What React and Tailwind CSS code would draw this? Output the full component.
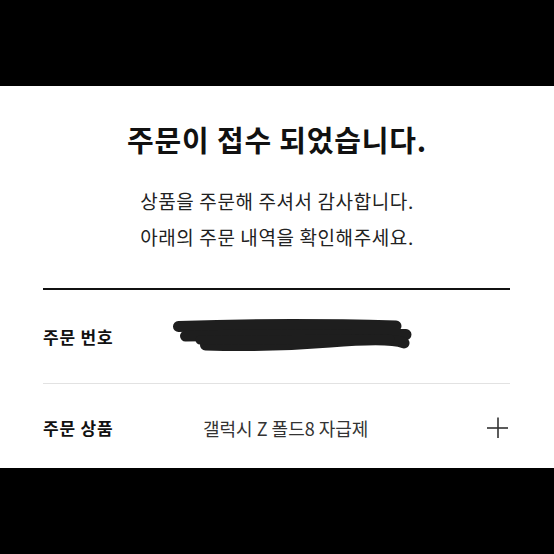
import React from "react";

// marker strokes that black out the order number
const Redaction = () => (
  <svg
    width="245"
    height="36"
    viewBox="0 0 245 36"
    className="absolute left-[127px] top-[29px]"
    fill="none"
    stroke="#1e1e1e"
    strokeWidth="11"
    strokeLinecap="round"
    strokeLinejoin="round"
  >
    <path d="M8.5 7.5 Q 110 4 226 7" />
    <path d="M15.5 17 Q 120 15 236 15.5" />
    <path d="M35.5 26 Q 100 28 160 23 T 234 24" />
    <path d="M30 21 L 220 20" strokeWidth="9" />
  </svg>
);

const PlusIcon = () => (
  <svg width="22" height="22" viewBox="0 0 22 22" stroke="#333" strokeWidth="1.6">
    <path d="M0 11 H21" />
    <path d="M11 0.5 V21" />
  </svg>
);

const App = () => {
  return (
    <div
      className="w-[554px] h-[554px] flex flex-col bg-black overflow-hidden"
      style={{ fontFamily: '"Noto Sans CJK KR", "Noto Sans", sans-serif' }}
    >
      <div className="h-[86px] shrink-0 bg-black" />

      <div className="h-[382px] shrink-0 bg-white overflow-hidden flex flex-col">
        <h1 className="pt-[32px] text-center text-[29px] leading-[42px] tracking-[0.8px] font-bold text-[#111]">
          주문이 접수 되었습니다.
        </h1>
        <p className="mt-[23px] text-center text-[19px] leading-[36px] tracking-[0.6px] text-[#222]">
          상품을 주문해 주셔서 감사합니다.
          <br />
          아래의 주문 내역을 확인해주세요.
        </p>

        {/* order summary */}
        <div className="ml-[43px] mr-[44px] mt-[33px] border-t-2 border-[#111]">
          <div className="relative h-[94px] flex items-center border-b border-[#e2e2e2]">
            <span className="w-[160px] text-[17px] tracking-[0.8px] font-bold text-[#111]">주문 번호</span>
            <Redaction />
          </div>
          <div className="h-[88px] flex items-center">
            <span className="w-[160px] text-[17px] tracking-[0.8px] font-bold text-[#111]">주문 상품</span>
            <span className="flex-1 text-[18px] text-[#333]">갤럭시 Z 폴드8 자급제</span>
            <span className="mr-[1px]">
              <PlusIcon />
            </span>
          </div>
        </div>
      </div>

      <div className="h-[86px] shrink-0 bg-black" />
    </div>
  );
};

export default App;
